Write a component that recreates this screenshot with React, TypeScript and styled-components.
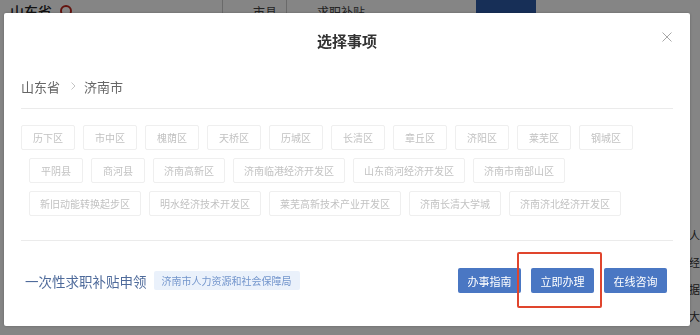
import styled, {createGlobalStyle} from 'styled-components';

const FONT = `"Noto Sans CJK SC", "Noto Sans", "Liberation Sans", sans-serif`;

const ROWS: {indent: number; items: string[]}[] = [
  {
    indent: 0,
    items: ['历下区', '市中区', '槐荫区', '天桥区', '历城区', '长清区', '章丘区', '济阳区', '莱芜区', '钢城区'],
  },
  {
    indent: 8,
    items: ['平阴县', '商河县', '济南高新区', '济南临港经济开发区', '山东商河经济开发区', '济南市南部山区'],
  },
  {
    indent: 8,
    items: ['新旧动能转换起步区', '明水经济技术开发区', '莱芜高新技术产业开发区', '济南长清大学城', '济南济北经济开发区'],
  },
];

const GlobalStyle = createGlobalStyle`
  html, body {
    margin: 0;
    padding: 0;
    background: #ffffff;
    font-family: ${FONT};
    overflow: hidden;
  }
`;

// page behind the dialog
const Page = styled.div`
  width: 700px;
  height: 335px;
  background: #ffffff;
  overflow: hidden;
`;

const TopBar = styled.div`
  display: flex;
  align-items: center;
  height: 22px;
  padding-left: 10px;
  color: #222;
  font-size: 14px;
`;

const Province = styled.span`
  font-weight: 500;
`;

const Pin = styled.span`
  width: 8px;
  height: 8px;
  margin-left: 8px;
  border: 2px solid #c0281e;
  border-radius: 50%;
`;

const Field = styled.div<{$w: number}>`
  width: ${(p) => p.$w}px;
  height: 22px;
  border-left: 1px solid #ccc;
  font-size: 12px;
  color: #444;
  display: flex;
  align-items: center;
  padding-left: 30px;
  box-sizing: border-box;
`;

const Spacer = styled.div<{$w: number}>`
  width: ${(p) => p.$w}px;
`;

const SearchButton = styled.div`
  width: 60px;
  height: 22px;
  background: #2c5aa8;
`;

const SideText = styled.div`
  display: flex;
  flex-direction: column;
  gap: 13px;
  margin: 206px 0 0 689px;
  font-size: 11px;
  color: #333;
  line-height: 14px;
`;

const Mask = styled.div`
  position: fixed;
  inset: 0;
  background: rgba(0, 0, 0, 0.48);
`;

const Modal = styled.div`
  position: fixed;
  left: 4px;
  top: 13px;
  width: 686px;
  height: 313px;
  background: #ffffff;
  border-radius: 2px;
  box-shadow: 0 0 3px rgba(0, 0, 0, 0.25);
  display: flex;
  flex-direction: column;
`;

const Header = styled.div`
  height: 54px;
  display: flex;
  align-items: center;
  justify-content: center;
  font-size: 15px;
  font-weight: 700;
  color: #333;
`;

const Close = styled.button`
  position: absolute;
  right: 18px;
  top: 19px;
  width: 10px;
  height: 10px;
  padding: 0;
  border: none;
  background: none;
  cursor: pointer;
  display: flex;
`;

const Body = styled.div`
  padding: 0 17px;
`;

const Crumbs = styled.div`
  display: flex;
  align-items: center;
  height: 20px;
  padding: 9px 0 12px;
  border-bottom: 1px solid #ebebeb;
  font-size: 13px;
  color: #666;
`;

const Sep = styled.span`
  display: flex;
  margin: 0 8px 0 11px;
`;

const TagArea = styled.div`
  display: flex;
  flex-direction: column;
  gap: 8px;
  padding: 16px 0 24px;
  border-bottom: 1px solid #ebebeb;
`;

const TagRow = styled.div<{$indent: number}>`
  display: flex;
  gap: 8px;
  padding-left: ${(p) => p.$indent}px;
`;

const Tag = styled.span`
  min-width: 54px;
  height: 25px;
  box-sizing: border-box;
  padding: 0 10px;
  border: 1px solid #efefef;
  border-radius: 2px;
  display: flex;
  align-items: center;
  justify-content: center;
  font-size: 10px;
  color: #c2c2c2;
  white-space: nowrap;
`;

const Footer = styled.div`
  display: flex;
  align-items: center;
  padding: 27px 6px 0 4px;
  height: 25px;
`;

const ItemName = styled.span`
  font-size: 13.5px;
  color: #4f6b9b;
`;

const Agency = styled.span`
  margin-left: 7px;
  height: 19px;
  padding: 0 8px;
  display: flex;
  align-items: center;
  background: #eaf1fb;
  border-radius: 2px;
  font-size: 10px;
  color: #7395cc;
`;

const Actions = styled.div`
  margin-left: auto;
  display: flex;
  gap: 10px;
`;

const ActionButton = styled.button`
  width: 63px;
  height: 25px;
  border: none;
  border-radius: 2px;
  background: #4a77c3;
  color: #ffffff;
  font-family: ${FONT};
  font-size: 11px;
  padding: 0;
  cursor: pointer;
`;

// red annotation box drawn over the screenshot
const Highlight = styled.div`
  position: absolute;
  left: 513px;
  top: 239px;
  width: 85px;
  height: 56px;
  box-sizing: border-box;
  border: 2px solid #e0452d;
  border-radius: 2px;
  pointer-events: none;
`;

export default function App() {
  return (
    <>
      <GlobalStyle />
      <Page>
        <TopBar>
          <Province>山东省</Province>
          <Pin />
          <Spacer $w={150} />
          <Field $w={64}>市县</Field>
          <Field $w={190}>求职补贴</Field>
          <SearchButton />
        </TopBar>
        <SideText>
          <span>人</span>
          <span>经</span>
          <span>据</span>
          <span>大</span>
        </SideText>
      </Page>
      <Mask />
      <Modal>
        <Header>选择事项</Header>
        <Close aria-label="close">
          <svg width="10" height="10" viewBox="0 0 10 10">
            <path d="M0.5 0.5L9.5 9.5M9.5 0.5L0.5 9.5" stroke="#a8a8a8" strokeWidth="1" />
          </svg>
        </Close>
        <Body>
          <Crumbs>
            <span>山东省</span>
            <Sep>
              <svg width="5" height="8" viewBox="0 0 5 8">
                <path d="M0.5 0.5L4 4L0.5 7.5" fill="none" stroke="#c4c4c4" strokeWidth="1" />
              </svg>
            </Sep>
            <span>济南市</span>
          </Crumbs>
          <TagArea>
            {ROWS.map((row, i) => (
              <TagRow key={i} $indent={row.indent}>
                {row.items.map((t) => (
                  <Tag key={t}>{t}</Tag>
                ))}
              </TagRow>
            ))}
          </TagArea>
          <Footer>
            <ItemName>一次性求职补贴申领</ItemName>
            <Agency>济南市人力资源和社会保障局</Agency>
            <Actions>
              <ActionButton>办事指南</ActionButton>
              <ActionButton>立即办理</ActionButton>
              <ActionButton>在线咨询</ActionButton>
            </Actions>
          </Footer>
        </Body>
        <Highlight />
      </Modal>
    </>
  );
}
